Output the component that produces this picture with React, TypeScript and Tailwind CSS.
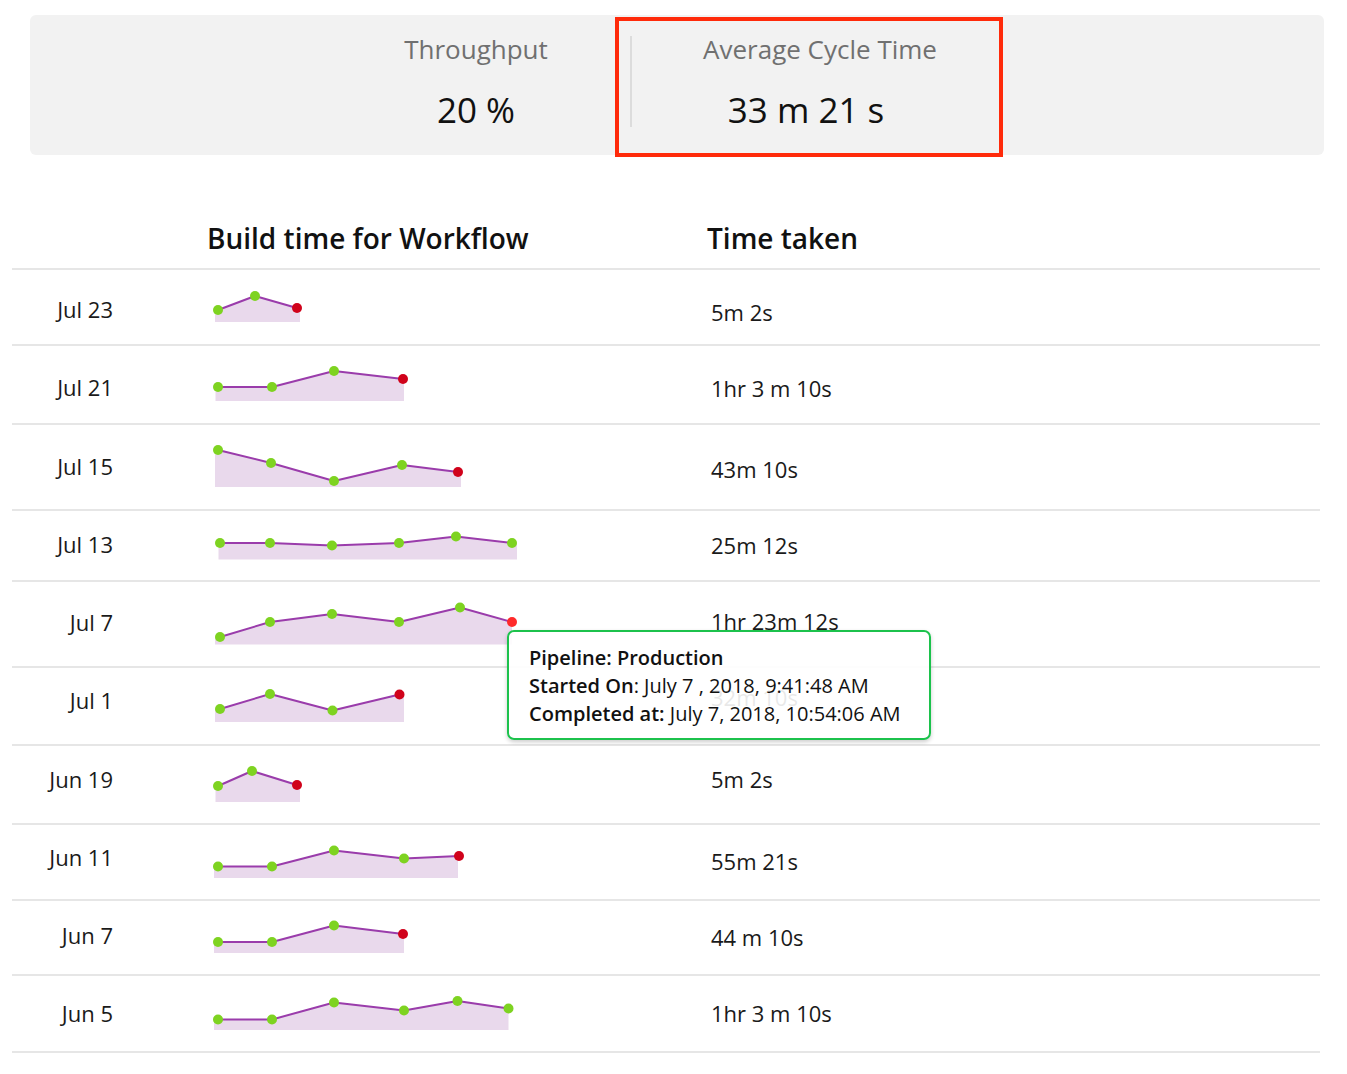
import React from "react";

type Row = {
  date: string;
  time: string;
  h: number;
  dOff: number;
  tOff: number;
  pts: [number, number][];
  last: "red" | "bright" | "green";
  fill: [number, number, number];
};

const rows: Row[] = [
  { date: "Jul 23", time: "5m 2s", h: 76, dOff: 2, tOff: 5, pts: [[218, 310], [255, 296], [297, 308]], last: "red", fill: [215, 300, 322] },
  { date: "Jul 21", time: "1hr 3 m 10s", h: 79, dOff: 2, tOff: 3, pts: [[218, 387], [272, 387], [334, 371], [403, 379]], last: "red", fill: [215.5, 404, 401] },
  { date: "Jul 15", time: "43m 10s", h: 86, dOff: -1, tOff: 2, pts: [[218, 450], [271, 463], [334, 481], [402, 465], [458, 472]], last: "red", fill: [215, 461, 487] },
  { date: "Jul 13", time: "25m 12s", h: 71, dOff: -2, tOff: -1, pts: [[220, 543], [270, 543], [332, 545.5], [399, 543], [456, 536.5], [512, 543]], last: "green", fill: [218.5, 517, 559.5] },
  { date: "Jul 7", time: "1hr 23m 12s", h: 86, dOff: -2, tOff: -3, pts: [[220, 637], [270, 622], [332, 614], [399, 622], [460, 607.5], [512, 622]], last: "bright", fill: [215, 512, 644.5] },
  { date: "Jul 1", time: "32m 10s", h: 78, dOff: -6, tOff: -9, pts: [[220, 709], [270, 694], [332.5, 710.5], [399.5, 694.5]], last: "red", fill: [215, 404, 722] },
  { date: "Jun 19", time: "5m 2s", h: 79, dOff: -6, tOff: -6, pts: [[218, 786], [252, 771], [297, 785]], last: "red", fill: [215.5, 300, 802] },
  { date: "Jun 11", time: "55m 21s", h: 76, dOff: -5, tOff: -1, pts: [[218, 866.5], [272, 866.5], [334, 850.5], [404, 858.5], [459, 856]], last: "red", fill: [214, 458, 878] },
  { date: "Jun 7", time: "44 m 10s", h: 75, dOff: -3, tOff: -1, pts: [[218, 942], [272, 942], [334, 925.5], [403, 934]], last: "red", fill: [214, 404, 953] },
  { date: "Jun 5", time: "1hr 3 m 10s", h: 77, dOff: -1, tOff: -1, pts: [[218, 1019.5], [272, 1019.5], [334, 1002.5], [404, 1010.5], [457.5, 1001], [508.5, 1008.5]], last: "green", fill: [214, 508.5, 1030] },
];

const GREEN = "#7ed321";
const RED = "#d0021b";
const BRIGHT = "#ff2a2a";

function Spark({ row, top }: { row: Row; top: number }) {
  const [fl, fr, fb] = row.fill;
  const p = row.pts;
  const first = p[0];
  const last = p[p.length - 1];
  const area =
    `M${fl},${first[1]} ` +
    p.map((q) => `L${q[0]},${q[1]}`).join(" ") +
    ` L${fr},${last[1]} L${fr},${fb} L${fl},${fb} Z`;
  const line = p.map((q, i) => `${i === 0 ? "M" : "L"}${q[0]},${q[1]}`).join(" ");
  const h = row.h - 2;
  return (
    <svg width={594} height={h} viewBox={`113 ${top} 594 ${h}`} className="block shrink-0">
      <path d={area} fill="#e9d9ec" />
      <path d={line} fill="none" stroke="#9a3cab" strokeWidth={2} strokeLinejoin="round" />
      {p.map((q, i) => {
        const isLast = i === p.length - 1;
        const c = isLast ? (row.last === "red" ? RED : row.last === "bright" ? BRIGHT : GREEN) : GREEN;
        return <circle key={i} cx={q[0]} cy={q[1]} r={5} fill={c} />;
      })}
    </svg>
  );
}

export default function App() {
  let top = 270;
  const rowTops = rows.map((r) => {
    const t = top;
    top += r.h;
    return t;
  });
  return (
    <div
      className="relative w-[1347px] min-h-[1074px] bg-white text-[#111]"
      style={{ fontFamily: '"Open Sans", "Noto Sans", sans-serif' }}
    >
      <div className="pt-[15px]">
        <div className="ml-[30px] flex h-[140px] w-[1294px] rounded-[6px] bg-[#f2f2f2]">
          <div className="ml-[296px] flex w-[300px] flex-col items-center pt-[16px]">
            <div className="text-[26px] leading-[36px] text-[#707070]">Throughput</div>
            <div className="mt-[21px] text-[35px] leading-[44px] text-[#111]">20 %</div>
          </div>
          <div className="ml-[4px] mt-[21px] h-[91px] w-[2px] bg-[#dcdcdc]" />
          <div className="flex w-[376px] flex-col items-center pt-[16px]">
            <div className="text-[26px] leading-[36px] text-[#707070]">Average Cycle Time</div>
            <div className="mt-[21px] pr-[28px] text-[35px] leading-[44px] text-[#111]">33 m 21 s</div>
          </div>
        </div>
      </div>

      <div className="ml-[12px] mt-[50px] w-[1308px]">
        <div className="flex h-[65px] items-center border-b-2 border-[#e6e6e6] pt-[2px]">
          <div className="w-[695px] pl-[195px] text-[28px] font-semibold leading-[38px] text-[#111]">
            Build time for Workflow
          </div>
          <div className="text-[28px] font-semibold leading-[38px] text-[#111]">Time taken</div>
        </div>
        {rows.map((r, i) => (
          <div
            key={r.date}
            className="flex items-center border-b-2 border-[#e6e6e6]"
            style={{ height: r.h }}
          >
            <div
              className="relative w-[101px] shrink-0 text-right text-[22px] leading-[30px] text-[#1a1a1a]"
              style={{ top: r.dOff }}
            >
              {r.date}
            </div>
            <Spark row={r} top={rowTops[i]} />
            <div
              className="relative pl-[4px] text-[22px] leading-[30px] text-[#1a1a1a]"
              style={{ top: r.tOff }}
            >
              {r.time}
            </div>
          </div>
        ))}
      </div>

      <div className="pointer-events-none absolute left-[615px] top-[17px] h-[140px] w-[388px] border-4 border-[#ff2a0a]" />

      <div className="absolute left-[507px] top-[630px] h-[110px] w-[424px] rounded-[7px] border-2 border-[#1cc24c] bg-white/90 pl-[20px] pt-[12px] text-[20px] leading-[28px] text-[#111] shadow-[0_2px_4px_rgba(0,0,0,0.2)]">
        <div className="font-semibold">Pipeline: Production</div>
        <div>
          <span className="font-semibold">Started On</span>: July 7 , 2018, 9:41:48 AM
        </div>
        <div>
          <span className="font-semibold">Completed at:</span> July 7, 2018, 10:54:06 AM
        </div>
      </div>
    </div>
  );
}
